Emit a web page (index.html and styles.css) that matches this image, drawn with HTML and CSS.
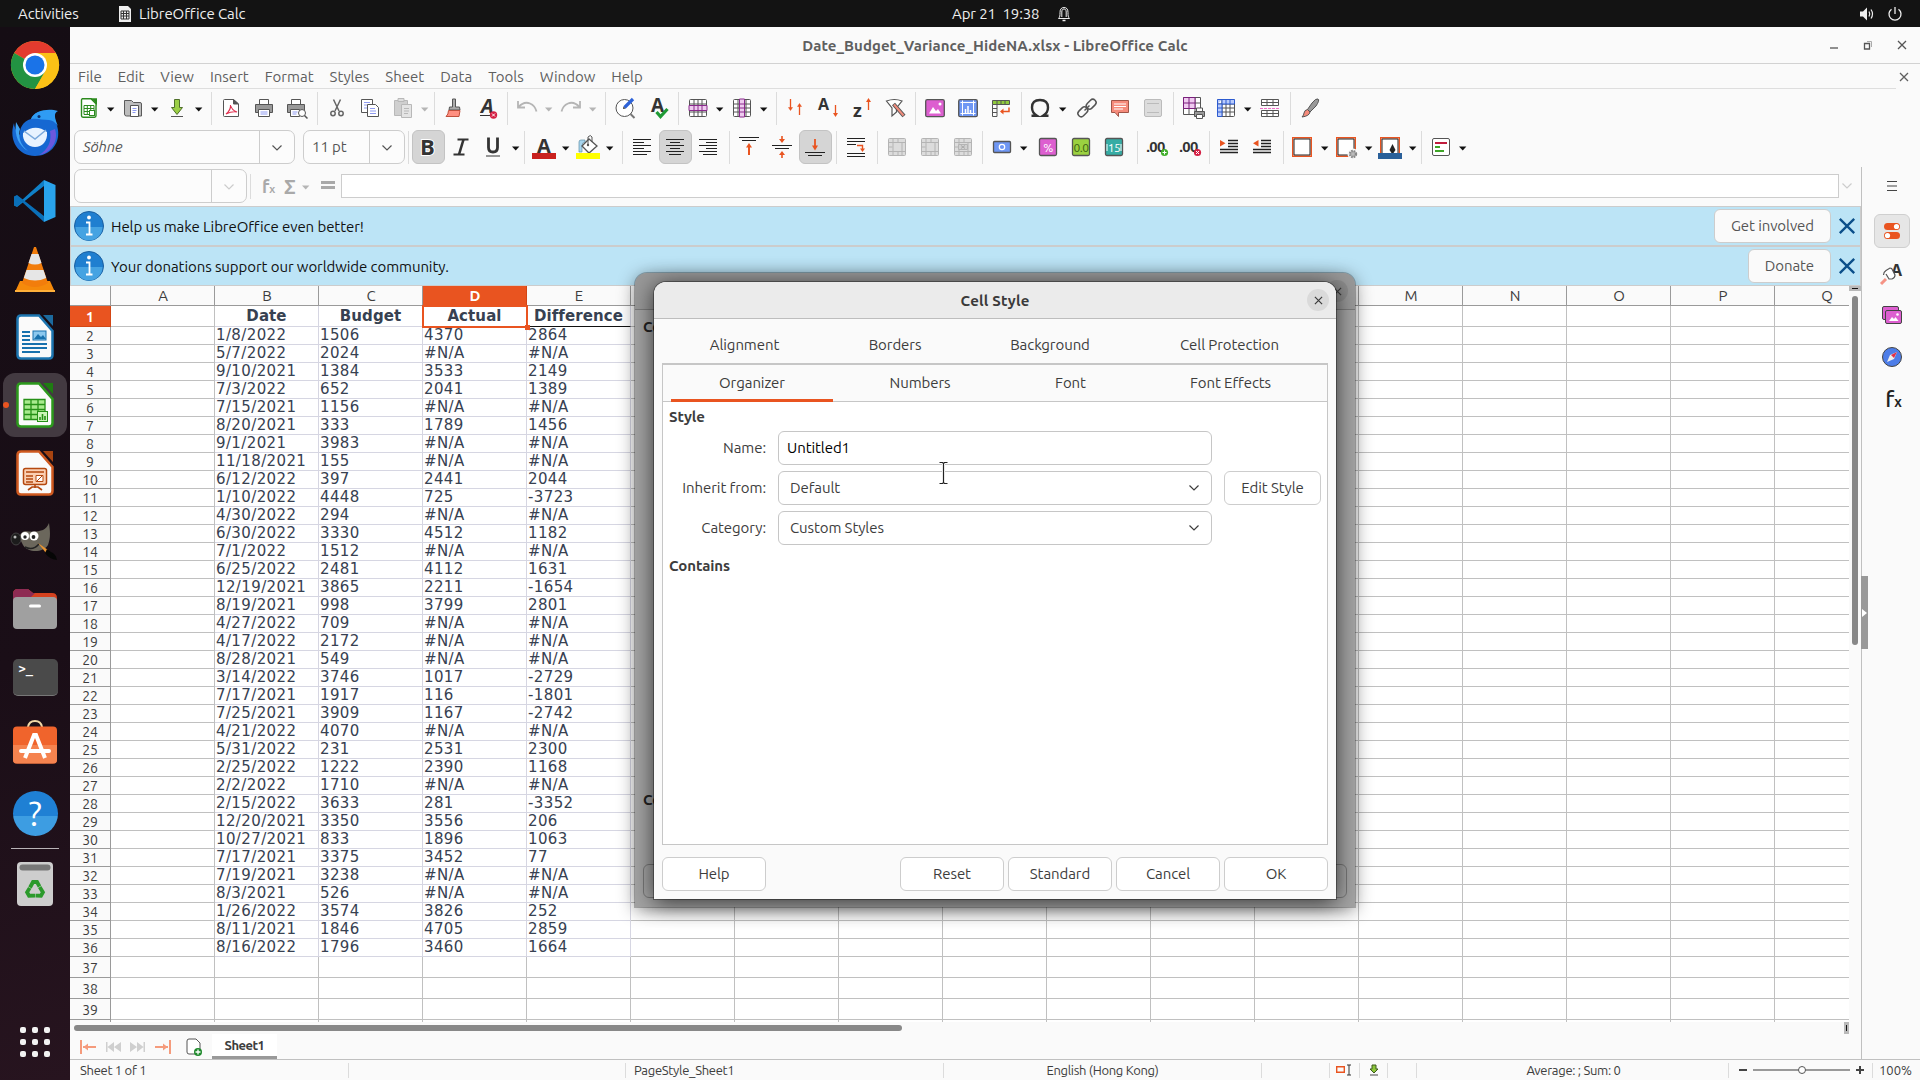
FILE: index.html
```html
<!DOCTYPE html>
<html lang="en">
  <head>
    <meta charset="utf-8">
    <title>Date_Budget_Variance_HideNA.xlsx - LibreOffice Calc</title>
    <link rel="stylesheet" href="styles.css">
    <script src="script.js" defer></script>
  </head>
  <body>
    <svg class="defs">
      <symbol id="arrow" viewBox="0 0 8 5"><path d="M0 .5h7.4L3.7 4.6z" fill="currentColor"/></symbol>
      <symbol id="chevron" viewBox="0 0 12 8"><path d="M1.500 1.500l4.500 4.500 4.500-4.500" fill="none" stroke="currentColor" stroke-width="1.200"/></symbol>
      <symbol id="close" viewBox="0 0 10 10"><path d="M1 1l8 8M9 1l-8 8" fill="none" stroke="currentColor" stroke-width="1.300"/></symbol>
      <symbol id="table" viewBox="0 0 24 24"><rect x="3.500" y="3.500" width="17" height="17" rx="1" fill="#fff" stroke="#555"/><path d="M3.500 8h17M3.500 12h17M3.500 16h17M8 3.500v17M12 3.500v17M16 3.500v17" stroke="#555"/></symbol>
      <symbol id="merge" viewBox="0 0 24 24"><rect x="3.500" y="3.500" width="17" height="17" rx="1" fill="#dcdcdc" stroke="#b4b4b4"/><path d="M3.500 7.500h17M3.500 16.500h17M3.500 12h4M8 3.500v17M17 7.500v13M13 3.500v4M13 16.500v4" stroke="#b4b4b4"/></symbol>
      <symbol id="info" viewBox="0 0 30 30"><circle cx="15" cy="15" r="14.500" fill="#1f7fd0" stroke="#1b5fa0"/><path d="M1.500 16a13.500 13.500 0 0 0 27 0z" fill="#45a3e2"/><circle cx="15" cy="6.500" r="1.900" fill="#fff"/><path d="M12 11.500h3.500V23M12 23.500h6.500" fill="none" stroke="#fff" stroke-width="1.800"/></symbol>
    </svg>

    <div class="topbar">
      <span class="activities">Activities</span>
      <svg class="app-icon" viewBox="0 0 14 18"><path d="M1 1h9l3 3v13H1z" fill="#eee"/><path d="M3 6h8v8H3zM3 8.500h8M3 11h8M5.500 6v8M8.500 6v8" fill="none" stroke="#333"/></svg>
      <span class="app-name">LibreOffice Calc</span>
      <div class="clock">
        <span>Apr 21&nbsp; 19:38</span>
        <svg width="14" height="16" viewBox="0 0 14 16" fill="none" stroke="#eee"><path d="M1.500 12.500c1.500-1.500 1.500-3 1.500-6C3 3 4.500 1.500 7 1.500S11 3 11 6.500c0 3 0 4.500 1.500 6zM4.800 11V6C4.800 4 5.500 3 7 3s2.200 1 2.200 3v5"/><path d="M5.500 14.500h3" stroke-width="1.500"/></svg>
      </div>
      <div class="tray">
        <svg width="16" height="16" viewBox="0 0 16 16"><path d="M1 5.500h3L8 1.500v13l-4-4H1z" fill="#eee"/><path d="M10 5.500q1.500 2.500 0 5M12 3.500q3 4.500 0 9" fill="none" stroke="#eee" stroke-width="1.200"/></svg>
        <svg width="16" height="16" viewBox="0 0 16 16" fill="none" stroke="#eee" stroke-width="1.300"><path d="M4.500 3.200a6 6 0 1 0 7 0M8 1v7"/></svg>
      </div>
    </div>

    <div class="dock">
      <div class="dock-item">
        <svg width="48" height="48" viewBox="0 0 48 48"><circle cx="24" cy="24" r="24" fill="#fbc116"/><path d="M24 24 3.200 12A24 24 0 0 1 44.800 12z" fill="#e33b2e"/><path d="M24 24 3.200 12A24 24 0 0 0 24 48L34.400 30z" fill="#229342"/><path d="M24 12h20.800A24 24 0 0 1 24 48l10.400-18z" fill="#fbc116"/><circle cx="24" cy="24" r="12" fill="#fff"/><circle cx="24" cy="24" r="9.500" fill="#1a73e8"/></svg>
      </div>
      <div class="dock-item">
        <svg width="48" height="48" viewBox="0 0 48 48"><path d="M3 14C-3 32 8 47 24 47c14 0 25-11 23-26-1-7-4-11-3-15-5-6-20-6-24 4C12 12 8 20 9 26 5 22 3 18 3 14z" fill="#1668d2"/><path d="M20 10C23 1 38-1 47 2c-5 2-3 8 0 15-3-4-6-6-9-6-6 0-12-2-18-1z" fill="#2f9cf4"/><path d="M44 20c4 12-4 24-16 26 9-5 13-14 11-24z" fill="#6b58dd"/><path d="M5 13c-2 14 3 24 12 29C9 36 7 27 9 20z" fill="#3fa4f5"/><path d="M12 24q12-10 24-1c1 9-5 15-12 15s-13-6-12-14z" fill="#e8f3ff"/><path d="M13 22l11 8 11-9" fill="none" stroke="#7ba9dc" stroke-width="1.500"/><circle cx="28" cy="7.500" r="1.500" fill="#0b2f6d"/></svg>
      </div>
      <div class="dock-item">
        <svg width="44" height="44" viewBox="0 0 44 44"><path d="M31 1 9 21 4 16.500 1 18v8.500L4 28l27-21z" fill="#1080c8"/><path d="M31 43 9 23l-5 4.500L1 26v-8.500L4 16l27 21z" fill="#0a6fb8"/><path d="M31 1l11.500 5v32L31 43z" fill="#29a3ec"/></svg>
      </div>
      <div class="dock-item">
        <svg width="42" height="48" viewBox="0 0 42 48"><path d="M6 36h30l5 11H1z" fill="#f58a0b"/><path d="M20 2h2l12 36q-13 8-26 0z" fill="#f27d0c"/><path d="M17.500 9h7l3 9q-6.500 3-13 0zM12.500 25h17l2.700 8q-11 5-22.400 0z" fill="#e6e6e6"/><path d="M1 45h40v2H1z" fill="#ffb03a"/></svg>
      </div>
      <div class="dock-item">
        <svg width="38" height="46" viewBox="0 0 38 46"><path d="M5 1.500h18L36.500 17v24q0 3.500-3.500 3.500H5Q1.500 44.500 1.500 41V5Q1.500 1.500 5 1.500z" fill="#fafafa" stroke="#1c75b0" stroke-width="2.500"/><path d="M27 1h10v11z" fill="#1c6a9e"/><path d="M6 18h8M6 22h8M6 26h8M6 30h25M6 34h25M6 38h18" stroke="#1871ad" stroke-width="2"/><rect x="17" y="17" width="13" height="9" fill="#8cc8ee" stroke="#1871ad"/><path d="M18 25l4-5 3 3 2-2 3 4z" fill="#1871ad"/></svg>
      </div>
      <div class="dock-item active">
        <svg width="38" height="46" viewBox="0 0 38 46"><path d="M5 1.500h18L36.500 17v24q0 3.500-3.500 3.500H5Q1.500 44.500 1.500 41V5Q1.500 1.500 5 1.500z" fill="#fafafa" stroke="#2c9a1c" stroke-width="2.500"/><path d="M27 1h10v11z" fill="#1f7c12"/><path d="M8 17.500h21v20H8zM8 22.500h21M8 27.500h21M8 32.500h21M15 17.500v20M22 17.500v20" fill="#a8ea8e" stroke="#259016" stroke-width="1.300"/><rect x="21.500" y="29.500" width="10" height="10" fill="#ccf4b8" stroke="#259016"/><path d="M24 38v-3M26.500 38v-6M29 38v-4" stroke="#259016" stroke-width="1.600"/></svg>
      </div>
      <div class="dock-item">
        <svg width="38" height="46" viewBox="0 0 38 46"><path d="M5 1.500h18L36.500 17v24q0 3.500-3.500 3.500H5Q1.500 44.500 1.500 41V5Q1.500 1.500 5 1.500z" fill="#fafafa" stroke="#cf5a20" stroke-width="2.500"/><path d="M27 1h10v11z" fill="#a84410"/><rect x="7.500" y="18.500" width="23" height="16" rx="2" fill="#fbd0b4" stroke="#b5480f" stroke-width="1.500"/><path d="M10 22h18M10 26h7M10 29h7M10 32h7" stroke="#b5480f" stroke-width="1.500"/><path d="M20 25.500h7v6h-7zM21 31l5-5" fill="#fff" stroke="#b5480f"/><path d="M19 35v3M12 40l4-3h6l4 3" fill="none" stroke="#b5480f" stroke-width="1.600"/></svg>
      </div>
      <div class="dock-item">
        <svg width="48" height="40" viewBox="0 0 48 40"><path d="M38 2c1 8 2 14-1 22-5 8-20 8-25 0L8 16q2-5 6-6 10 2 18-1 4-2 6-7z" fill="#6b675c"/><ellipse cx="5" cy="18" rx="5" ry="6" fill="#1c1c1c" stroke="#555" stroke-width=".7"/><circle cx="4" cy="16" r="1.500" fill="#bbb"/><circle cx="14" cy="15" r="4" fill="#fff"/><circle cx="23" cy="15" r="4.500" fill="#fff"/><circle cx="14" cy="16" r="1.700" fill="#222"/><circle cx="22.500" cy="16" r="1.900" fill="#222"/><path d="M14 26q8 4 14-3" stroke="#222" fill="none" stroke-width="1.500"/><path d="M27 22l10 7-2 3z" fill="#e89432"/><path d="M36 28l4 3q5 2 6 8-8-1-12-7z" fill="#060606"/></svg>
      </div>
      <div class="dock-item">
        <svg width="46" height="42" viewBox="0 0 46 42"><path d="M1 6q0-5 5-5h10l5 4h19q5 0 5 5v8H1z" fill="#d5421f"/><path d="M1 6q0-5 5-5h10l5 4h2L10 18H1z" fill="#8e2b53"/><rect x="1" y="9" width="44" height="32" rx="4" fill="#a0a0a0"/><rect x="17" y="16.500" width="12" height="3" rx="1.500" fill="#fff"/></svg>
      </div>
      <div class="dock-item">
        <div class="terminal">&gt;_</div>
      </div>
      <div class="dock-item software">
        <svg width="46" height="44" viewBox="0 0 46 44"><path d="M16 9V7q1-6 7-6t7 6v2" fill="none" stroke="#f1d9a7" stroke-width="2"/><rect x="1" y="6.500" width="44" height="37" rx="4" fill="#f0642c"/><path d="M1 25h44v15q0 3.500-4 3.500H5q-4 0-4-3.500z" fill="#f5834f"/><path d="M13 38l9-23h2L33 38" fill="none" stroke="#fff" stroke-width="4"/><path d="M9 31h28" stroke="#fff" stroke-width="4" stroke-linecap="round"/></svg>
      </div>
      <div class="dock-item">
        <div class="help-icon">?</div>
      </div>
      <div class="dock-line"></div>
      <div class="dock-item trash">
        <svg width="38" height="46" viewBox="0 0 38 46"><rect x="1" y="1" width="36" height="44" rx="4" fill="#cdcdcd"/><rect x="3.500" y="3.500" width="31" height="6" rx="3" fill="#777"/><g transform="translate(19 29)" fill="none" stroke="#2b9a2b" stroke-width="3.800"><path d="M-5-2.500l3-5.500h4l2.500 4.500"/><path d="M-5-2.500l3-5.500h4l2.500 4.500" transform="rotate(120)"/><path d="M-5-2.500l3-5.500h4l2.500 4.500" transform="rotate(240)"/></g></svg>
      </div>
      <div class="app-grid"><i></i><i></i><i></i><i></i><i></i><i></i><i></i><i></i><i></i></div>
    </div>

    <div class="window">
      <div class="titlebar">
        <span class="title">Date_Budget_Variance_HideNA.xlsx - LibreOffice Calc</span>
        <div class="win-buttons">
          <svg width="10" height="10" viewBox="0 0 10 10"><path d="M1 8h8" stroke="#555" stroke-width="1.300"/></svg>
          <svg width="10" height="10" viewBox="0 0 10 10" fill="none" stroke="#555"><path d="M1.500 3.500h5v5.500h-5z" stroke-width="1.300"/><path d="M4 1.500h4.500V7" stroke="#aaa"/></svg>
          <svg width="10" height="10" color="#555"><use href="#close"/></svg>
        </div>
      </div>
      <div class="menubar">
        <span>File</span><span>Edit</span><span>View</span><span>Insert</span><span>Format</span><span>Styles</span><span>Sheet</span><span>Data</span><span>Tools</span><span>Window</span><span>Help</span>
        <svg class="doc-close" width="10" height="10"><use href="#close"/></svg>
      </div>

      <div class="toolbar standard">
        <div class="btn dd"><svg viewBox="0 0 24 24"><path d="M5 2.800h9l5 5v12q0 1.400-1.400 1.400H6q-1.500 0-1.500-1.400V4q0-1.200 1-1.200z" fill="#fff" stroke="#2c8a1e" stroke-width="1.400"/><path d="M12 2.200h8v8q-2-6-8-8z" fill="#2c8a1e"/><path d="M7 9.500h10v9H7zM7 12.500h10M7 15.500h10M10.300 9.500v9M13.700 9.500v9" fill="#fff" stroke="#2c8a1e"/><rect x="12.500" y="14.500" width="5" height="5" fill="#fff" stroke="#2c8a1e"/></svg><svg class="arr"><use href="#arrow"/></svg></div>
        <div class="btn dd"><svg viewBox="0 0 24 24"><path d="M3.500 18V4.500h7l2 2H19q1.500 0 1.500 1.500v12H5.500q-2 0-2-2z" fill="#bdbdbd" stroke="#5a5a5a"/><path d="M9.500 9.500h8v11h-8z" fill="#fff" stroke="#555"/><path d="M11.500 12.500h4M11.500 14.500h4M11.500 16.500h3" stroke="#8f9bf0"/></svg><svg class="arr"><use href="#arrow"/></svg></div>
        <div class="btn dd"><svg viewBox="0 0 24 24"><path d="M9.500 3.500h5v8h3L12 18.500 6.500 11.500h3z" fill="#9bcf45" stroke="#4f6f2a"/><path d="M6 20.500h12" stroke="#555"/></svg><svg class="arr"><use href="#arrow"/></svg></div>
        <div class="sep wide"></div>
        <div class="btn"><svg viewBox="0 0 24 24"><path d="M5.500 3.500h9l5 4.500v12.500h-14q-1 0-1-1v-15q0-1 1-1z" fill="#fff" stroke="#555"/><path d="M14.500 3.500v4.500h5z" fill="#555" stroke="#555"/><path d="M7 18q5-4 4.500-9 1 5 6.500 7-5-1-11 2z" fill="none" stroke="#e0304f" stroke-width="1.100"/></svg></div>
        <div class="btn"><svg viewBox="0 0 24 24"><path d="M7.500 8V3.500h9V8" fill="#fff" stroke="#555"/><path d="M3.500 8.500h17v8h-17z" fill="#999" stroke="#555"/><path d="M6.500 13.500h11v7h-11z" fill="#fff" stroke="#555"/><path d="M8.500 16h7M8.500 18h7" stroke="#8f9bf0"/></svg></div>
        <div class="btn"><svg viewBox="0 0 24 24"><path d="M6.500 8V3.500h9V8" fill="#fff" stroke="#555"/><path d="M2.500 8.500h17v8h-17z" fill="#999" stroke="#555"/><path d="M5.500 13.500h9v7h-9z" fill="#fff" stroke="#555"/><path d="M7.500 16h5M7.500 18h4" stroke="#8f9bf0"/><circle cx="17" cy="17" r="3.500" fill="#fff" stroke="#555"/><path d="M19.500 19.500l3 3" stroke="#555" stroke-width="1.500"/></svg></div>
        <div class="sep"></div>
        <div class="btn"><svg viewBox="0 0 24 24" fill="none" stroke="#666" stroke-width="1.500"><path d="M8.500 3.500L14 15M15.500 3.500L10 15"/><circle cx="8" cy="17.500" r="2.200"/><circle cx="16" cy="17.500" r="2.200"/></svg></div>
        <div class="btn"><svg viewBox="0 0 24 24" stroke="#555"><path d="M3.500 3.500h11v13h-11z" fill="#fff"/><path d="M9.500 8.500h8l3 3v9h-11z" fill="#fff"/><path d="M6 6.500h6M6 9h3M6 12h3M12 12.500h5M12 15h6M12 17.500h6" stroke="#8f9bf0"/></svg></div>
        <div class="btn dd off"><svg viewBox="0 0 24 24" stroke="#b8b8b8"><path d="M3.500 4.500h13v15h-13z" fill="#cfcfcf"/><path d="M7 2.500h6v3H7z" fill="#ddd"/><path d="M10.500 8.500h10v13h-10z" fill="#e4e4e4"/><path d="M13 12.500h5M13 15h5M13 17.500h4"/></svg><svg class="arr"><use href="#arrow"/></svg></div>
        <div class="sep"></div>
        <div class="btn"><svg viewBox="0 0 24 24"><path d="M10.500 3h3v8h4l.5 3H7l.5-3h3z" fill="#aaa" stroke="#555"/><path d="M6.500 14.500h11.500l-1 6H4q2.500-2 2.500-6z" fill="#ff8f80" stroke="#c0503c"/></svg></div>
        <div class="btn nudge"><svg viewBox="0 0 24 24"><text x="4" y="17" class="glyph" font-style="italic" font-size="20">A</text><path d="M3 19.500h10" stroke="#333"/><circle cx="16.500" cy="19" r="3.700" fill="#d42044"/><path d="M15 17.500l3 3M18 17.500l-3 3" stroke="#fff"/></svg></div>
        <div class="sep"></div>
        <div class="btn dd off"><svg viewBox="0 0 24 24" fill="none" stroke="#b5b5b5" stroke-width="1.800"><path d="M3 5v6.500h7M3.500 11Q9 5 15 7.500q5 2 6.500 8"/></svg><svg class="arr"><use href="#arrow"/></svg></div>
        <div class="btn dd off"><svg viewBox="0 0 24 24" fill="none" stroke="#b5b5b5" stroke-width="1.800"><path d="M21 5v6.500h-7M20.500 11Q15 5 9 7.500q-5 2-6.500 8"/></svg><svg class="arr"><use href="#arrow"/></svg></div>
        <div class="sep wide"></div>
        <div class="btn"><svg viewBox="0 0 24 24"><circle cx="11.500" cy="12" r="8.500" fill="#fff" stroke="#555"/><path d="M17.500 18l4 4" stroke="#777" stroke-width="2"/><path d="M11.500 11.500L20 3" stroke="#2d62d8" stroke-width="3.200"/><path d="M10 13l2.500-.5-2-2z" fill="#333"/></svg></div>
        <div class="btn nudge"><svg viewBox="0 0 24 24"><text x="3" y="16" class="glyph" font-size="19">A</text><path d="M8.500 16l4 4.500 7-7.500" fill="none" stroke="#1f9a34" stroke-width="3.200"/></svg></div>
        <div class="sep"></div>
        <div class="btn dd"><svg viewBox="0 0 24 24"><use href="#table"/><path d="M3 9.500h18v5H3z" fill="#efcbf0" stroke="#8a2a8c"/><path d="M8 9.500v5M12 9.500v5M16 9.500v5" stroke="#8a2a8c"/></svg><svg class="arr"><use href="#arrow"/></svg></div>
        <div class="btn dd"><svg viewBox="0 0 24 24"><use href="#table"/><path d="M9.500 3v18h5V3z" fill="#efcbf0" stroke="#8a2a8c"/><path d="M9.500 8h5M9.500 12h5M9.500 16h5" stroke="#8a2a8c"/></svg><svg class="arr"><use href="#arrow"/></svg></div>
        <div class="sep wide"></div>
        <div class="btn"><svg viewBox="0 0 24 24" fill="none" stroke="#e95420" stroke-width="1.300"><path d="M6.500 3v10M15.500 9v10"/><path d="M4.500 11.500h4l-2 3zM13.500 10.500h4l-2-3z" fill="#e95420" stroke-width=".5"/></svg></div>
        <div class="btn"><svg viewBox="0 0 24 24"><text x="1" y="14" class="glyph" font-size="16">A</text><path d="M18.500 9v9" stroke="#e95420" stroke-width="1.300"/><path d="M16 17h5l-2.500 4z" fill="#e95420"/></svg></div>
        <div class="btn"><svg viewBox="0 0 24 24"><text x="3" y="21" class="glyph" font-size="18">z</text><path d="M18.500 6v8" stroke="#e95420" stroke-width="1.300"/><path d="M16 6h5l-2.500-4z" fill="#e95420"/></svg></div>
        <div class="btn"><svg viewBox="0 0 24 24"><path d="M3.500 5q8-3 15.500 0l-5.500 7v4L9 20v-8z" fill="#fff" stroke="#555" stroke-width="1.200"/><path d="M10.500 8L21 20" stroke="#555" stroke-width="4"/><path d="M11 8.500L20.500 19.500" stroke="#f08c7c" stroke-width="2"/></svg></div>
        <div class="sep"></div>
        <div class="btn"><svg viewBox="0 0 24 24"><rect x="2.700" y="3.700" width="18.600" height="17" rx="1.500" fill="#dd5fd0" stroke="#555" stroke-width="1.300"/><path d="M6 17.500l4-6.500 3 4 2-2 3 4.500z" fill="#fff"/><circle cx="17" cy="8" r="1.500" fill="#fff"/></svg></div>
        <div class="btn"><svg viewBox="0 0 24 24"><rect x="2.700" y="3.700" width="18.600" height="17" rx="1.500" fill="#6f97f4" stroke="#555" stroke-width="1.300"/><path d="M6.500 6.500h11v11h-11zM4.500 6.500h15M4.500 17.500h15M6.500 4.500v15M17.500 4.500v15" fill="none" stroke="#fff"/><path d="M9.500 17v-4M12 17v-7M14.500 17v-3" stroke="#fff" stroke-width="1.500"/></svg></div>
        <div class="btn"><svg viewBox="0 0 24 24"><path d="M3.500 4.500h17v4h-17z" fill="#8fca3c" stroke="#555"/><path d="M8 4.500v4M12 4.500v4M16 4.500v4M3.500 8.500v12H8v-12M3.500 12.500H8M3.500 16.500H8" fill="none" stroke="#555"/><path d="M20 11.500v4h-8" fill="none" stroke="#e95420" stroke-width="1.500"/><path d="M14.500 12.500v6l-3.500-3z" fill="#e95420"/></svg></div>
        <div class="sep"></div>
        <div class="btn dd"><svg viewBox="0 0 24 24" fill="none" stroke="#333" stroke-width="2.400"><path d="M2.500 19.800h5.500q-5-3-5-8.300Q3 4 11 4t8 7.500q0 5.300-5 8.300h5.500"/></svg><svg class="arr"><use href="#arrow"/></svg></div>
        <div class="btn link"><svg viewBox="0 0 24 24" fill="none" stroke="#555" stroke-width="1.500"><rect x="10.500" y="5" width="11" height="6.500" rx="3.200" transform="rotate(-45 16 8)"/><rect x="2.500" y="12.500" width="11" height="6.500" rx="3.200" transform="rotate(-45 8 16)"/><path d="M9.500 14.500l5-5"/></svg></div>
        <div class="btn"><svg viewBox="0 0 24 24"><path d="M3.500 4.500h17v12h-10v4l-3.500-4h-3.500z" fill="#f58b7b" stroke="#a05548"/><path d="M6 8h12M6 10.500h12M6 13h9" stroke="#fff"/></svg></div>
        <div class="btn"><svg viewBox="0 0 24 24"><rect x="3.500" y="3.500" width="17" height="17" rx="1.500" fill="#dcdcdc" stroke="#bbb"/><path d="M6 7.500h12M6 16.500h12" stroke="#bbb"/></svg></div>
        <div class="sep"></div>
        <div class="btn"><svg viewBox="0 0 24 24"><path d="M2.500 1.500h17v17h-17zM2.500 7h17M2.500 12.500h17M8 1.500v17M14 1.500v17" fill="#fff" stroke="#555"/><path d="M2.500 1.500H14V12.500H2.500zM2.500 7H14M8 1.500v11" fill="#efcbf0" stroke="#7a1f7c"/><path d="M15.500 15v-3h6v3" fill="#fff" stroke="#555"/><path d="M13.500 15.500h10v5h-10z" fill="#999" stroke="#555"/><path d="M15.500 18.500h6v4h-6z" fill="#fff" stroke="#555"/></svg></div>
        <div class="btn dd"><svg viewBox="0 0 24 24"><use href="#table"/><path d="M3.500 3.500h17V8H8v12.500H3.500zM12 3.500V8M16 3.500V8M3.500 8H8V3.500M3.500 12H8M3.500 16H8" fill="#b9cbfb" stroke="#2d5bd0"/></svg><svg class="arr"><use href="#arrow"/></svg></div>
        <div class="btn"><svg viewBox="0 0 24 24"><path d="M3.500 3.500h17v6h-17zM3.500 6.500h17M9 3.500v6M15 3.500v6M3.500 14.500h17v6h-17zM3.500 17.500h17M9 14.500v6M15 14.500v6" fill="#fff" stroke="#555"/><path d="M2 12.500h20" stroke="#ef6fc8" stroke-dasharray="3 1"/></svg></div>
        <div class="sep"></div>
        <div class="btn"><svg viewBox="0 0 24 24"><path d="M20 3q2 1-2 7l-6 6-2.500-2.500L14 7q4-5 6-4z" fill="#999" stroke="#555"/><path d="M9.500 13.500L12 16q-.5 4-8 5 2-2 2-4 .5-3 3.500-3.500z" fill="#f58b7b" stroke="#555"/></svg></div>
      </div>

      <div class="toolbar formatting">
        <div class="combo font-name"><em>Söhne</em><span class="combo-arr"><svg width="12" height="8"><use href="#chevron"/></svg></span></div>
        <div class="combo font-size"><b>11 pt</b><span class="combo-arr"><svg width="12" height="8"><use href="#chevron"/></svg></span></div>
        <div class="sep first"></div>
        <div class="btn on"><svg viewBox="0 0 24 24"><text x="4" y="20" class="glyph halo" font-size="22">B</text></svg></div>
        <div class="btn"><svg viewBox="0 0 24 24" fill="none" stroke="#333"><path d="M8.500 4.500h11M4.500 19.500h11" stroke-width="1.800"/><path d="M14.500 4.500l-4.500 15" stroke-width="2.600"/></svg></div>
        <div class="btn dd"><svg viewBox="0 0 24 24" fill="none" stroke="#333"><path d="M6.500 2.500v10q0 4.500 4.500 4.500t4.500-4.500v-10" stroke-width="2.800"/><path d="M4 21h14"/></svg><svg class="arr"><use href="#arrow"/></svg></div>
        <div class="sep narrow"></div>
        <div class="btn dd"><svg viewBox="0 0 24 24"><text x="5" y="17.500" class="glyph" font-size="20">A</text><path d="M0 18h24v6H0z" fill="#c9211e"/></svg><svg class="arr"><use href="#arrow"/></svg></div>
        <div class="btn dd"><svg viewBox="0 0 24 24"><path d="M3 17V7q0-2 2-2h4v2q-3 0-3 4v6z" fill="#a8d5ee" stroke="#5f8fa8" stroke-width=".7"/><path d="M13 4l8 7-8 7-7-7z" fill="#fff" stroke="#555" stroke-width="1.300"/><path d="M12 10V2q2.500-3 4 0v5" fill="none" stroke="#555"/><circle cx="12" cy="10" r="1.200" fill="#555"/><path d="M0 18h24v6H0z" fill="#ff0"/></svg><svg class="arr"><use href="#arrow"/></svg></div>
        <div class="sep wide"></div>
        <div class="btn"><svg viewBox="0 0 24 24" stroke="#222"><path d="M3 4.500h18M3 7.500h11M3 10.500h18M3 13.500h11M3 16.500h18M3 19.500h14"/></svg></div>
        <div class="btn on"><svg viewBox="0 0 24 24" stroke="#222"><path d="M3 4.500h18M7 7.500h10M3 10.500h18M7 13.500h10M3 16.500h18M6 19.500h12"/></svg></div>
        <div class="btn"><svg viewBox="0 0 24 24" stroke="#222"><path d="M3 4.500h18M10 7.500h11M3 10.500h18M10 13.500h11M3 16.500h18M7 19.500h14"/></svg></div>
        <div class="sep"></div>
        <div class="btn"><svg viewBox="0 0 24 24"><path d="M2 2.500h20M5 5.500h14" stroke="#222" stroke-width="1.200"/><path d="M12 10v10" stroke="#e95420" stroke-width="2"/><path d="M9 12.500h6l-3-4.500z" fill="#e95420"/></svg></div>
        <div class="btn"><svg viewBox="0 0 24 24"><path d="M2 10.500h20M5 13.500h14" stroke="#222" stroke-width="1.200"/><path d="M12 1v4M12 19v4" stroke="#e95420" stroke-width="1.600"/><path d="M9 4h6l-3 4zM9 20h6l-3-4z" fill="#e95420"/></svg></div>
        <div class="btn on"><svg viewBox="0 0 24 24"><path d="M2 17.500h20M5 20.500h14" stroke="#222" stroke-width="1.200"/><path d="M12 4v8" stroke="#e95420" stroke-width="1.800"/><path d="M9 10.500h6l-3 5z" fill="#e95420"/></svg></div>
        <div class="sep"></div>
        <div class="btn"><svg viewBox="0 0 24 24" stroke="#222"><path d="M3 3.500h18M3 6.500h18M3 9.500h9M3 18.500h18M3 21.500h18"/><path d="M13 10.500h5.500v4" fill="none" stroke="#e95420" stroke-width="1.400"/><path d="M16 13.500h5l-2.500 3.500z" fill="#e95420" stroke="none"/></svg></div>
        <div class="sep"></div>
        <div class="btn"><svg><use href="#merge"/></svg></div>
        <div class="btn"><svg><use href="#merge"/></svg></div>
        <div class="btn"><svg viewBox="0 0 24 24"><use href="#merge"/><path d="M7.500 9.500h9v5h-9z" fill="#d0d0d0" stroke="#b4b4b4"/><path d="M10 10.500l4 3M14 10.500l-4 3" stroke="#aaa"/></svg></div>
        <div class="sep narrow"></div>
        <div class="btn dd"><svg viewBox="0 0 24 24"><rect x="3.500" y="6.500" width="17" height="11" rx="1" fill="#6f97f4" stroke="#555" stroke-width="1.300"/><circle cx="12" cy="12" r="2.700" fill="none" stroke="#fff" stroke-width="1.200"/></svg><svg class="arr"><use href="#arrow"/></svg></div>
        <div class="btn link"><svg viewBox="0 0 24 24"><rect x="3.500" y="3.500" width="17" height="17" rx="1.500" fill="#dd5fd0" stroke="#555" stroke-width="1.300"/><text x="12" y="17" class="num" fill="#fff">%</text></svg></div>
        <div class="btn"><svg viewBox="0 0 24 24"><rect x="3.500" y="3.500" width="17" height="17" rx="1.500" fill="#9bd140" stroke="#555" stroke-width="1.300"/><text x="12" y="17" class="num" fill="#3c6312">0.0</text></svg></div>
        <div class="btn"><svg viewBox="0 0 24 24"><rect x="3.500" y="3.500" width="17" height="17" rx="1.500" fill="#36aca4" stroke="#555" stroke-width="1.300"/><text x="12" y="17" class="num" fill="#fff">15</text><path d="M5 9v7M19 9v7" stroke="#fff"/></svg></div>
        <div class="sep wide"></div>
        <div class="btn"><svg viewBox="0 0 24 24"><text x="1" y="17" class="dec">.00</text><circle cx="19.500" cy="17.500" r="3.600" fill="#3fae29"/><path d="M17.500 17.500h4M19.500 15.500v4" stroke="#fff"/></svg></div>
        <div class="btn"><svg viewBox="0 0 24 24"><text x="1" y="17" class="dec">.00</text><circle cx="19.500" cy="17.500" r="3.600" fill="#d42044"/><path d="M18 16l3 3M21 16l-3 3" stroke="#fff"/></svg></div>
        <div class="sep narrow"></div>
        <div class="btn"><svg viewBox="0 0 24 24"><path d="M11 5.500h10M11 8.500h10M11 11.500h10M3 14.500h18M3 17.500h18" stroke="#222" stroke-width="1.300"/><path d="M3 5l5.500 3.200L3 11.500z" fill="#e95420"/></svg></div>
        <div class="btn"><svg viewBox="0 0 24 24"><path d="M11 5.500h10M11 8.500h10M11 11.500h10M3 14.500h18M3 17.500h18" stroke="#222" stroke-width="1.300"/><path d="M8.500 5L3 8.200l5.500 3.300z" fill="#e95420"/></svg></div>
        <div class="sep"></div>
        <div class="btn dd"><svg viewBox="0 0 24 24"><path d="M1.700 2.700h18.600v18.600H1.700z" fill="#fff" stroke="#e95420" stroke-width="1.400"/><path d="M3 4h16v16H3z" fill="none" stroke="#222"/></svg><svg class="arr"><use href="#arrow"/></svg></div>
        <div class="btn dd"><svg viewBox="0 0 24 24"><path d="M1.700 2.700h18.600v18.600H1.700z" fill="#fff" stroke="#e95420" stroke-width="1.400"/><path d="M3 4h16v16H3z" fill="none" stroke="#222"/><circle cx="18" cy="19" r="5.500" fill="#fafafa"/><circle cx="18" cy="19" r="3" fill="#bbb" stroke="#888" stroke-width="2.400" stroke-dasharray="1.600 .8"/></svg><svg class="arr"><use href="#arrow"/></svg></div>
        <div class="btn dd"><svg viewBox="0 0 24 24"><path d="M1.700 2.700h18.600v17H1.700z" fill="#fff" stroke="#e95420" stroke-width="1.400"/><path d="M3 4h16v16H3z" fill="none" stroke="#222"/><path d="M13.500 9l3 6-2 3h-2l-2-3z" fill="#222"/><path d="M-1 18h24v6H-1z" fill="#2a6099"/></svg><svg class="arr"><use href="#arrow"/></svg></div>
        <div class="sep narrow"></div>
        <div class="btn dd"><svg viewBox="0 0 24 24"><rect x="3.500" y="3.500" width="17" height="17" rx="1.500" fill="#fff" stroke="#555"/><path d="M6 8h12" stroke="#c01c3e" stroke-width="2"/><path d="M6 12h5M6 16h9" stroke="#3fa527" stroke-width="2"/></svg><svg class="arr"><use href="#arrow"/></svg></div>
      </div>

      <div class="work">
        <div class="main">
          <div class="formula">
            <div class="combo name-box"><em></em><span class="combo-arr"><svg width="12" height="8"><use href="#chevron"/></svg></span></div>
            <div class="sep"></div>
            <div class="fx">f<small>x</small></div>
            <div class="sum">Σ</div>
            <svg class="arr"><use href="#arrow"/></svg>
            <div class="equals"></div>
            <div class="input-line"></div>
            <svg class="expand" width="12" height="8"><use href="#chevron"/></svg>
          </div>
          <div class="infobar">
            <svg width="30" height="30"><use href="#info"/></svg>
            <span>Help us make LibreOffice even better!</span>
            <button>Get involved</button>
            <svg class="x" width="18" height="18"><use href="#close"/></svg>
          </div>
          <div class="infobar">
            <svg width="30" height="30"><use href="#info"/></svg>
            <span>Your donations support our worldwide community.</span>
            <button>Donate</button>
            <svg class="x" width="18" height="18"><use href="#close"/></svg>
          </div>
          <div class="sheet-area">
            <div class="sheet">
              <table id="grid"></table>
              <div class="cursor-box"></div>
            </div>
            <div class="vscroll"><div class="split"></div><div class="thumb"></div></div>
          </div>
          <div class="hscroll"><div class="thumb"></div><div class="split"></div></div>
          <div class="tabs">
            <svg width="16" height="14" viewBox="0 0 16 14" stroke="#f59b7c" stroke-width="2" fill="none"><path d="M1 0v14M3 7h13"/><path d="M8 3.500v7L3.500 7z" fill="#f59b7c" stroke="none"/></svg>
            <svg width="16" height="14" viewBox="0 0 16 14" fill="#cfcfcf"><path d="M1 2h1.500v10H1zM9 2v10L2.500 7zM16 2v10L9 7z"/></svg>
            <svg width="16" height="14" viewBox="0 0 16 14" fill="#cfcfcf"><path d="M13.500 2H15v10h-1.500zM7 2v10l6.500-5zM0 2v10l7-5z"/></svg>
            <svg width="16" height="14" viewBox="0 0 16 14" stroke="#f59b7c" stroke-width="2" fill="none"><path d="M15 0v14M0 7h13"/><path d="M8 3.500v7L12.500 7z" fill="#f59b7c" stroke="none"/></svg>
            <svg class="new-sheet" width="16" height="18" viewBox="0 0 16 18"><path d="M1 3q0-2 2-2h7l4 4v11H3q-2 0-2-2z" fill="#fff" stroke="#555"/><circle cx="12" cy="14" r="4" fill="#1f8a2c"/><path d="M9.500 14h5M12 11.500v5" stroke="#fff" stroke-width="1.300"/></svg>
            <div class="tab">Sheet1</div>
          </div>
        </div>
        <div class="sidebar">
          <svg width="12" height="12" viewBox="0 0 12 12" stroke="#444"><path d="M1 1.500h10M1 6h10M1 10.500h10"/></svg>
          <div class="side-on"><svg width="18" height="18" viewBox="0 0 18 18"><rect x="1" y="1" width="16" height="7" rx="3.500" fill="#e95420"/><rect x="1" y="10" width="16" height="7" rx="3.500" fill="#e95420"/><circle cx="13.500" cy="4.500" r="2.600" fill="#fff"/><circle cx="4.500" cy="13.500" r="2.600" fill="#fff"/></svg></div>
          <svg width="24" height="24" viewBox="0 0 24 24"><text x="11" y="14" class="glyph" font-size="16">A</text><path d="M1 22l5-5" stroke="#f59385" stroke-width="3"/><path d="M3.500 13q0-3 2.500-4.500L10 6q2 0 2.500 2l2.500 5q0 3-3 4H9l-3-5" fill="#fff" stroke="#555" stroke-width="1.200"/></svg>
          <svg width="22" height="22" viewBox="0 0 22 22"><rect x="1.500" y="1.500" width="16" height="13" rx="1.500" fill="#dd5fd0" stroke="#444"/><rect x="4.500" y="5.500" width="16" height="13" rx="1.500" fill="#dd5fd0" stroke="#444"/><path d="M8 16l3-4 2 2 1.500-2 3 4z" fill="#fff"/><circle cx="16.500" cy="9.500" r="1.300" fill="#fff"/></svg>
          <svg width="22" height="22" viewBox="0 0 22 22"><circle cx="11" cy="11" r="9.500" fill="#4d7de8" stroke="#444"/><path d="M16 6l-3 7-7 3 3-7z" fill="#eee"/><path d="M16 6l-3 6-3-3z" fill="#e03048"/></svg>
          <div class="side-fx">f<small>x</small></div>
          <div class="handle"></div>
        </div>
      </div>

      <div class="statusbar">
        <div class="s1">Sheet 1 of 1</div>
        <div class="s2"></div>
        <div class="s3">PageStyle_Sheet1</div>
        <div class="s4">English (Hong Kong)</div>
        <div class="s5"></div>
        <div class="s6"><svg width="20" height="12" viewBox="0 0 20 12" fill="none"><path d="M1.700 2.700h7.600v5.600H1.700z" stroke="#e95420" stroke-width="1.400"/><path d="M12 1h4M14 1v10M12 11h4" stroke="#333"/></svg></div>
        <div class="s7"><svg width="10" height="12" viewBox="0 0 10 12"><path d="M3 1h4v4h2L5 9 1 5h2z" fill="#8cc63a" stroke="#3c5a1c"/><path d="M1 11h8" stroke="#444"/></svg></div>
        <div class="s8"></div>
        <div class="s9">Average: ; Sum: 0</div>
        <div class="s10"><i class="minus"></i><div class="track"><i class="knob"></i></div><i class="plus"></i></div>
        <div class="s11">100%</div>
      </div>
    </div>

    <div class="dialog behind">
      <div class="dialog-title"><span class="round"><svg width="9" height="9"><use href="#close"/></svg></span></div>
      <div class="behind-body">
        <b>Ce</b>
        <b class="lower">Ce</b>
        <div class="behind-button"></div>
      </div>
    </div>

    <div class="dialog front">
      <div class="dialog-title">Cell Style<span class="round"><svg width="9" height="9"><use href="#close"/></svg></span></div>
      <div class="tab-row upper">
        <span>Alignment</span><span>Borders</span><span>Background</span><span>Cell Protection</span>
      </div>
      <div class="notebook">
        <div class="tab-row lower">
          <span class="current">Organizer</span><span>Numbers</span><span>Font</span><span>Font Effects</span>
        </div>
        <div class="page">
          <h4>Style</h4>
          <div class="form">
            <label>Name:</label>
            <div class="field text">Untitled1</div>
            <div></div>
            <label>Inherit from:</label>
            <div class="field">Default<svg width="12" height="8"><use href="#chevron"/></svg></div>
            <button>Edit Style</button>
            <label>Category:</label>
            <div class="field">Custom Styles<svg width="12" height="8"><use href="#chevron"/></svg></div>
            <div></div>
          </div>
          <h4 class="contains">Contains</h4>
        </div>
      </div>
      <div class="dialog-buttons">
        <button class="help">Help</button>
        <button>Reset</button>
        <button>Standard</button>
        <button>Cancel</button>
        <button>OK</button>
      </div>
    </div>

    <svg class="ibeam" width="11" height="24" viewBox="0 0 11 24"><path d="M1.500 1.500h3l1 1 1-1h3M5.500 2v20M1.500 22.500h3l1-1 1 1h3" fill="none" stroke="#fff" stroke-width="3"/><path d="M1.500 1.500h3l1 1 1-1h3M5.500 2v20M1.500 22.500h3l1-1 1 1h3" fill="none" stroke="#222" stroke-width="1.200"/></svg>
  </body>
</html>
```
FILE: styles.css
```css
* {
  box-sizing: border-box;
}

body {
  margin: 0;
  width: 1920px;
  height: 1080px;
  overflow: hidden;
  display: grid;
  grid-template-columns: 70px 1850px;
  grid-template-rows: 27px 1053px;
  font-family: Ubuntu, "Noto Sans", sans-serif;
  font-size: 15px;
  letter-spacing: -0.08px;
  color: #3d3d3d;
}

svg {
  display: block;
  flex: none;
  overflow: visible;
}

button {
  font: inherit;
  letter-spacing: inherit;
  color: inherit;
  padding: 0 0 2px;
  height: 34px;
  border: 1px solid #cdcdcd;
  border-radius: 6px;
  background: #fff;
}

.defs {
  position: absolute;
  width: 0;
  height: 0;
}

/* top panel */
.topbar {
  grid-column: 1 / 3;
  display: flex;
  align-items: center;
  position: relative;
  background: #131313;
  color: #eee;
}

.activities {
  width: 100px;
  padding-left: 18px;
}

.app-icon {
  width: 14px;
  height: 18px;
  margin: 0 7px 0 18px;
}

.clock {
  position: absolute;
  left: 952px;
  display: flex;
  align-items: center;
  gap: 18px;
}

.clock span {
  letter-spacing: -0.12px;
}

.tray {
  margin-left: auto;
  margin-right: 17px;
  display: flex;
  gap: 12px;
}

/* dock */
.dock {
  display: flex;
  flex-direction: column;
  align-items: center;
  padding-top: 4px;
  background: linear-gradient(165deg, #150d14 0%, #1a0e17 60%, #27141f 100%);
}

.dock-item {
  width: 64px;
  height: 68px;
  flex: none;
  display: flex;
  align-items: center;
  justify-content: center;
}

.dock-item.active {
  height: 64px;
  margin: 2px 0;
  border-radius: 12px;
  background: #433a41;
  position: relative;
}

.dock-item.active::before {
  content: "";
  position: absolute;
  left: 0;
  width: 6px;
  height: 6px;
  border-radius: 3px;
  background: #e95420;
}

.dock-item.software {
  padding-bottom: 7px;
}

.terminal {
  width: 45px;
  height: 37px;
  padding: 3px 6px;
  border-radius: 5px;
  background: #4a4a4a;
  border-bottom: 1px solid #777;
  color: #fff;
  font: bold 12px "DejaVu Sans Mono", monospace;
}

.help-icon {
  width: 45px;
  height: 45px;
  border-radius: 50%;
  background: linear-gradient(#1f80d4 55%, #3d9de2 55%);
  color: #fff;
  font-size: 34px;
  line-height: 44px;
  text-align: center;
}

.dock-line {
  width: 48px;
  height: 1px;
  margin-top: 1px;
  background: #b9b4b7;
}

.trash {
  height: 70px;
}

.app-grid {
  display: grid;
  grid-template-columns: repeat(3, 6px);
  gap: 6px;
  margin-top: 108px;
}

.app-grid i {
  height: 6px;
  border-radius: 2px;
  background: #f2f2f2;
}

/* main window */
.window {
  display: flex;
  flex-direction: column;
  background: #fafafa;
}

.titlebar {
  height: 37px;
  display: flex;
  align-items: center;
  position: relative;
  border-bottom: 1px solid #d2d2d2;
}

.title {
  width: 100%;
  text-align: center;
  font-weight: bold;
  letter-spacing: 0.08px;
  color: #5f5f5f;
  padding-top: 1px;
}

.win-buttons {
  position: absolute;
  right: 13px;
  display: flex;
  gap: 24px;
}

.menubar {
  height: 25px;
  width: 1826px;
  display: flex;
  align-items: center;
  padding-top: 1px;
  border-bottom: 1px solid #dedede;
  color: #5f5f5f;
  position: relative;
}

.menubar span {
  padding: 0 8px;
  letter-spacing: 0;
}

.doc-close {
  position: absolute;
  right: -13px;
}

.toolbar {
  display: flex;
  align-items: center;
}

.standard {
  height: 38px;
  padding-left: 3px;
}

.formatting {
  height: 40px;
  padding: 0 0 0 4px;
}

.btn {
  width: 33px;
  height: 34px;
  flex: none;
  display: flex;
  align-items: center;
  padding-left: 4px;
}

.btn > svg {
  width: 24px;
  height: 24px;
}

.btn.dd {
  width: 44px;
}

.btn.on {
  padding-left: 3px;
  border: 1px solid #c3c3c3;
  border-radius: 6px;
  background: #d5d5d5;
}

.btn.link {
  margin-left: 2px;
}

.btn.nudge {
  padding-left: 6px;
}

.btn > .arr,
.arr {
  width: 8px;
  height: 5px;
  margin-left: 6px;
  margin-top: 3px;
  color: #111;
}

.off .arr,
.formula .arr {
  color: #b5b5b5;
}

.sep {
  width: 7px;
  height: 33px;
  flex: none;
  border-right: 3px solid transparent;
  background: linear-gradient(#dcdcdc, #dcdcdc) right / 1px 100% no-repeat;
}

.sep.wide {
  width: 10px;
}

.formatting .sep {
  width: 8px;
}

.formatting .sep.wide {
  width: 10px;
}

.formatting .sep.narrow {
  width: 6px;
}

.formatting .sep.first {
  width: 7px;
}

.glyph {
  font-family: "Open Sans", sans-serif;
  font-weight: bold;
  fill: #333;
}

.halo {
  stroke: #fff;
  stroke-width: 2px;
  paint-order: stroke;
}

.num {
  font-size: 12px;
  letter-spacing: -0.5px;
  text-anchor: middle;
}

.dec {
  font: bold 15px "Liberation Sans", sans-serif;
  letter-spacing: -0.8px;
  fill: #333;
}

.combo {
  height: 34px;
  display: flex;
  border: 1px solid #cdcdcd;
  border-radius: 7px;
  background: #fcfcfc;
  line-height: 32px;
  color: #555;
}

.combo em,
.combo b {
  flex: 1;
  padding-left: 8px;
  font-weight: normal;
}

.combo-arr {
  width: 35px;
  border-left: 1px solid #cdcdcd;
  padding: 13px 11px;
}

.font-name {
  width: 221px;
}

.font-size {
  width: 102px;
  margin-left: 8px;
}

.work {
  flex: 1;
  display: flex;
  min-height: 0;
}

.main {
  width: 1791px;
  display: flex;
  flex-direction: column;
}

.formula {
  height: 39px;
  flex: none;
  display: flex;
  align-items: center;
  padding: 0 0 1px 4px;
  color: #a9a9a9;
}

.name-box {
  width: 173px;
  flex: none;
}

.name-box .combo-arr,
.expand {
  color: #ccc;
}

.formula .sep {
  height: 25px;
}

.fx,
.sum {
  font-weight: bold;
  font-size: 18px;
  margin-left: 8px;
}

.fx {
  width: 14px;
}

.fx small {
  font-size: 11px;
}

.sum {
  font-size: 20px;
}

.equals {
  width: 14px;
  height: 8px;
  margin: 0 6px 2px 11px;
  border: solid #a9a9a9;
  border-width: 3px 0;
}

.input-line {
  flex: 1;
  height: 24px;
  border: 1px solid #cdcdcd;
  background: #fff;
}

.expand {
  margin: 0 8px 0 2px;
}

.infobar {
  height: 40px;
  flex: none;
  display: flex;
  align-items: center;
  padding: 0 4px 0 3px;
  border: 1px solid #ccc;
  background: #bce4f6;
  color: #111;
}

.infobar span {
  flex: 1;
  padding-left: 7px;
}

.infobar button {
  padding: 0 16px 1px;
  margin-right: 7px;
  background: #fafafa;
  color: #555;
}

.infobar .x {
  color: #0b4f8a;
}

.sheet-area {
  display: flex;
  flex: none;
  height: 736px;
}

.sheet {
  position: relative;
  width: 1779px;
  overflow: hidden;
}

#grid {
  width: 1809px;
  table-layout: fixed;
  border-spacing: 0;
  background: #fff;
}

#grid th,
#grid td {
  padding: 0;
  height: 18px;
  line-height: 14px;
  border: solid #c0c0c0;
  border-width: 0 1px 1px 0;
  overflow: hidden;
  white-space: nowrap;
}

#grid th {
  padding-top: 1px;
  border-color: #9a9a9a;
  background: #fafafa;
  font-size: 14px;
  font-weight: normal;
  text-align: center;
  color: #3d3d3d;
}

#grid th.sel {
  background: #e95420;
  border-color: #d34615;
  color: #fff;
  font-weight: bold;
}

#grid .colhead th {
  height: 20px;
  padding: 0 0 0 1px;
  font-size: 15px;
}

#grid .tall th,
#grid .tall td {
  height: 21px;
}

#grid td.data {
  padding: 0 0 2px 1px;
  border-color: #d6d6e2;
  font-family: "DejaVu Sans", sans-serif;
  font-size: 15px;
  letter-spacing: 0.38px;
  color: #374151;
}

#grid td.head {
  text-align: center;
  font-weight: bold;
  letter-spacing: 0.1px;
  padding: 0;
}

#grid td.edge {
  border-bottom-color: #111;
}

.cursor-box {
  position: absolute;
  left: 352px;
  top: 19px;
  width: 106px;
  height: 23px;
  border: 2px solid #e95420;
}

.cursor-box::after {
  content: "";
  position: absolute;
  right: -4px;
  bottom: -4px;
  width: 5px;
  height: 5px;
  background: #e95420;
}

.vscroll {
  width: 12px;
}

.vscroll .split {
  height: 5px;
  border: solid #b9b9b9;
  border-width: 2px 3px;
  background: #111;
}

.vscroll .thumb {
  width: 6px;
  height: 349px;
  margin: 5px 3px;
  border-radius: 3px;
  background: #888;
}

.hscroll {
  height: 12px;
  flex: none;
  display: flex;
  align-items: center;
  padding: 0 12px 0 4px;
}

.hscroll .thumb {
  width: 828px;
  height: 6px;
  border-radius: 3px;
  background: #888;
}

.hscroll .split {
  width: 5px;
  height: 12px;
  margin-left: auto;
  border: solid #b9b9b9;
  border-width: 3px 2px;
  background: #111;
}

.tabs {
  flex: 1;
  display: flex;
  align-items: center;
  padding-left: 10px;
  gap: 9px;
}

.new-sheet {
  margin-left: 6px;
}

.tab {
  width: 65px;
  height: 25px;
  margin-left: 1px;
  border-bottom: 3px solid #999;
  background: #fff;
  font-weight: bold;
  font-size: 13px;
  line-height: 22px;
  text-align: center;
  letter-spacing: -0.5px;
}

.sidebar {
  width: 59px;
  border-left: 1px solid #c0c0c0;
  display: flex;
  flex-direction: column;
  align-items: center;
  padding: 13px 0 0 2px;
  position: relative;
}

.side-on {
  width: 36px;
  height: 34px;
  margin: 22px 0 14px;
  display: flex;
  align-items: center;
  justify-content: center;
  border: 1px solid #cfcfcf;
  border-radius: 6px;
  background: #e6e6e6;
}

.sidebar > svg + svg {
  margin-top: 19px;
}

.side-fx {
  margin-top: 15px;
  padding-left: 3px;
  font-size: 23px;
  line-height: 31px;
  font-weight: 500;
  color: #222;
}

.side-fx small {
  font-size: 14px;
  font-weight: bold;
}

.handle {
  position: absolute;
  left: -1px;
  top: 409px;
  width: 7px;
  height: 73px;
  background: #999;
}

.handle::after {
  content: "";
  position: absolute;
  left: 1px;
  top: 33px;
  border: solid transparent;
  border-width: 4px 0 4px 5px;
  border-left-color: #fff;
}

.statusbar {
  height: 21px;
  display: flex;
  align-items: center;
  border-top: 1px solid #c0c0c0;
  font-size: 13px;
  letter-spacing: -0.3px;
}

.statusbar > div {
  height: 15px;
  line-height: 14px;
  border-right: 1px solid #dcdcdc;
}

.statusbar > .s1 {
  width: 279px;
  padding-left: 10px;
}

.s2 {
  width: 277px;
}

.s3 {
  width: 318px;
  padding-left: 8px;
}

.s4 {
  width: 318px;
  text-align: center;
}

.s5 {
  width: 68px;
}

.s6 {
  width: 30px;
  padding: 1px 0 0 5px;
}

.s7 {
  width: 28px;
  padding: 1px 0 0 9px;
}

.s8 {
  width: 29px;
}

.s9 {
  width: 312px;
  padding-left: 2px;
  text-align: center;
}

.s10 {
  width: 144px;
  display: flex;
  align-items: center;
  gap: 6px;
  padding-left: 10px;
}

.minus,
.plus {
  width: 8px;
  height: 2px;
  background: #444;
}

.plus {
  position: relative;
}

.plus::after {
  content: "";
  position: absolute;
  left: 3px;
  top: -3px;
  width: 2px;
  height: 8px;
  background: #444;
}

.track {
  width: 97px;
  height: 2px;
  background: #999;
  display: flex;
  align-items: center;
  justify-content: center;
}

.knob {
  width: 8px;
  height: 8px;
  border: 1px solid #555;
  border-radius: 50%;
  background: #fff;
}

.statusbar > .s11 {
  border: 0;
  padding-left: 6px;
  letter-spacing: 0;
}

/* dialogs */
.dialog {
  position: absolute;
  border-radius: 12px 12px 0 0;
}

.dialog-title {
  height: 37px;
  line-height: 38px;
  position: relative;
  border-radius: 12px 12px 0 0;
  border-bottom: 1px solid #bdbdbd;
  background: #ebebeb;
  text-align: center;
  font-weight: bold;
  letter-spacing: 0.2px;
  color: #3a3a3a;
}

.round {
  position: absolute;
  right: 7px;
  top: 7px;
  width: 22px;
  height: 22px;
  border-radius: 50%;
  background: #dadada;
  display: flex;
  align-items: center;
  justify-content: center;
}

.behind {
  left: 635px;
  top: 273px;
  width: 720px;
  height: 634px;
  background: #a3a3a3;
  box-shadow: 0 0 0 1px rgba(0, 0, 0, 0.25), 0 3px 18px rgba(0, 0, 0, 0.45);
}

.behind .dialog-title {
  background: #989898;
  border-color: #7a7a7a;
}

.behind .round {
  background: #8b8b8b;
}

.behind-body {
  height: 597px;
  display: flex;
  flex-direction: column;
  padding: 8px 8px 9px;
  color: #222;
}

.behind-body .lower {
  margin-top: 452px;
  line-height: 20px;
  padding-top: 3px;
}

.behind-button {
  height: 34px;
  margin-top: auto;
  border: 1px solid #777;
  border-radius: 6px;
}

.front {
  left: 654px;
  top: 282px;
  width: 682px;
  height: 617px;
  background: #fafafa;
  box-shadow: 0 0 0 1px rgba(0, 0, 0, 0.35), 0 3px 22px rgba(0, 0, 0, 0.7);
}

.tab-row {
  display: grid;
  text-align: center;
}

.tab-row.upper {
  grid-template-columns: 165px 136px 174px 185px;
  height: 44px;
  padding-left: 8px;
  line-height: 52px;
}

.notebook {
  margin: 0 8px;
  height: 482px;
  border: 1px solid #c6c6c6;
  border-top-width: 2px;
  background: #fff;
}

.tab-row.lower {
  grid-template-columns: 162px 174px 127px 193px;
  height: 37px;
  padding-left: 8px;
  line-height: 36px;
  background: #fafafa;
  border-bottom: 1px solid #c6c6c6;
}

.tab-row .current {
  height: 37px;
  border-bottom: 3px solid #e95420;
}

.page {
  padding: 5px 6px;
}

h4 {
  margin: 0;
  font-size: 15px;
  line-height: 20px;
}

.form {
  display: grid;
  grid-template-columns: 97px 434px 97px;
  gap: 6px 12px;
  align-items: center;
  padding-top: 4px;
}

.form label {
  text-align: right;
  padding-bottom: 2px;
}

.field {
  height: 34px;
  display: flex;
  align-items: center;
  justify-content: space-between;
  padding: 0 11px 2px;
  border: 1px solid #c6c6c6;
  border-radius: 6px;
  background: #fff;
}

.field svg {
  margin-top: 2px;
}

.field.text {
  padding-left: 8px;
  color: #000;
}

.contains {
  margin-top: 11px;
}

.dialog-buttons {
  display: flex;
  gap: 4px;
  padding: 12px 8px;
}

.dialog-buttons button {
  width: 104px;
}

.dialog-buttons .help {
  margin-right: auto;
}

.ibeam {
  position: absolute;
  left: 938px;
  top: 461px;
}
```
FILE: script.js
```js
const columns = "ABCDEFGHIJKLMNOPQ".split("");

const rows = [
  ["Date", "Budget", "Actual", "Difference"],
  ["1/8/2022", "1506", "4370", "2864"],
  ["5/7/2022", "2024", "#N/A", "#N/A"],
  ["9/10/2021", "1384", "3533", "2149"],
  ["7/3/2022", "652", "2041", "1389"],
  ["7/15/2021", "1156", "#N/A", "#N/A"],
  ["8/20/2021", "333", "1789", "1456"],
  ["9/1/2021", "3983", "#N/A", "#N/A"],
  ["11/18/2021", "155", "#N/A", "#N/A"],
  ["6/12/2022", "397", "2441", "2044"],
  ["1/10/2022", "4448", "725", "-3723"],
  ["4/30/2022", "294", "#N/A", "#N/A"],
  ["6/30/2022", "3330", "4512", "1182"],
  ["7/1/2022", "1512", "#N/A", "#N/A"],
  ["6/25/2022", "2481", "4112", "1631"],
  ["12/19/2021", "3865", "2211", "-1654"],
  ["8/19/2021", "998", "3799", "2801"],
  ["4/27/2022", "709", "#N/A", "#N/A"],
  ["4/17/2022", "2172", "#N/A", "#N/A"],
  ["8/28/2021", "549", "#N/A", "#N/A"],
  ["3/14/2022", "3746", "1017", "-2729"],
  ["7/17/2021", "1917", "116", "-1801"],
  ["7/25/2021", "3909", "1167", "-2742"],
  ["4/21/2022", "4070", "#N/A", "#N/A"],
  ["5/31/2022", "231", "2531", "2300"],
  ["2/25/2022", "1222", "2390", "1168"],
  ["2/2/2022", "1710", "#N/A", "#N/A"],
  ["2/15/2022", "3633", "281", "-3352"],
  ["12/20/2021", "3350", "3556", "206"],
  ["10/27/2021", "833", "1896", "1063"],
  ["7/17/2021", "3375", "3452", "77"],
  ["7/19/2021", "3238", "#N/A", "#N/A"],
  ["8/3/2021", "526", "#N/A", "#N/A"],
  ["1/26/2022", "3574", "3826", "252"],
  ["8/11/2021", "1846", "4705", "2859"],
  ["8/16/2022", "1796", "3460", "1664"],
];

const LAST_ROW = 39;
const SELECTED = "D";

/**
 * Build the sheet: column letters, the data rows and the empty ones below.
 */
function buildGrid() {
  let html = '<colgroup><col style="width: 41px">';
  html += '<col style="width: 104px">'.repeat(columns.length) + "</colgroup>";

  html += '<tr class="colhead"><th></th>';
  for (const c of columns) {
    html += `<th class="${c === SELECTED ? "sel" : ""}">${c}</th>`;
  }
  html += "</tr>";

  for (let r = 1; r <= LAST_ROW + 1; r++) {
    const values = rows[r - 1];
    const tall = r === 1 || r > rows.length;
    html += `<tr class="${tall ? "tall" : ""}">`;
    html += `<th class="${r === 1 ? "sel" : ""}">${r <= LAST_ROW ? r : ""}</th>`;
    columns.forEach((c, i) => {
      if (values && i >= 1 && i <= 4) {
        const head = r === 1 ? " head" : "";
        const edge = r === 1 && i === 4 ? " edge" : "";
        html += `<td class="data${head}${edge}">${values[i - 1]}</td>`;
      } else {
        html += "<td></td>";
      }
    });
    html += "</tr>";
  }

  document.getElementById("grid").innerHTML = html;
}

buildGrid();
```
